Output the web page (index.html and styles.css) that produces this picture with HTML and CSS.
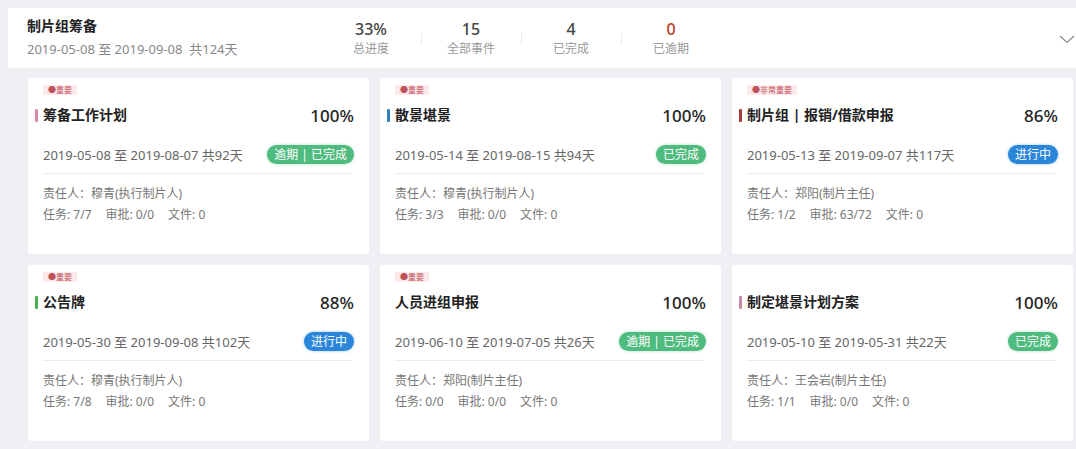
FILE: index.html
```html
<!DOCTYPE html>
<html lang="zh">
<head>
<meta charset="utf-8">
<link rel="stylesheet" href="styles.css">
</head>
<body>
<div class="header">
  <div class="proj">
    <div class="proj-title">制片组筹备</div>
    <div class="proj-date">2019-05-08 至 2019-09-08&nbsp;&nbsp;共124天</div>
  </div>
  <div class="stats">
    <div class="stat"><div class="num">33%</div><div class="lbl">总进度</div></div>
    <div class="stat"><div class="num">15</div><div class="lbl">全部事件</div></div>
    <div class="stat"><div class="num">4</div><div class="lbl">已完成</div></div>
    <div class="stat"><div class="num red">0</div><div class="lbl">已逾期</div></div>
  </div>
  <svg class="chev" width="16" height="10" viewBox="0 0 16 10"><polyline points="1,2 8,8.5 15,2" fill="none" stroke="#8a8a8a" stroke-width="1.2"/></svg>
</div>

<div class="grid">
  <div class="card">
    <div class="tagrow"><span class="tag">●重要</span></div>
    <div class="titlerow"><div class="title"><i class="bar pink"></i>筹备工作计划</div><div class="pct">100%</div></div>
    <div class="daterow"><span class="date">2019-05-08 至 2019-08-07 共92天</span><span class="badge green">逾期 | 已完成</span></div>
    <div class="info">责任人：穆青(执行制片人)</div>
    <div class="info">任务: 7/7<span class="sp"></span>审批: 0/0<span class="sp"></span>文件: 0</div>
  </div>
  <div class="card">
    <div class="tagrow"><span class="tag">●重要</span></div>
    <div class="titlerow"><div class="title"><i class="bar blue"></i>散景堪景</div><div class="pct">100%</div></div>
    <div class="daterow"><span class="date">2019-05-14 至 2019-08-15 共94天</span><span class="badge green">已完成</span></div>
    <div class="info">责任人：穆青(执行制片人)</div>
    <div class="info">任务: 3/3<span class="sp"></span>审批: 0/0<span class="sp"></span>文件: 0</div>
  </div>
  <div class="card">
    <div class="tagrow"><span class="tag">●非常重要</span></div>
    <div class="titlerow"><div class="title"><i class="bar red"></i>制片组 | 报销/借款申报</div><div class="pct">86%</div></div>
    <div class="daterow"><span class="date">2019-05-13 至 2019-09-07 共117天</span><span class="badge bluebg">进行中</span></div>
    <div class="info">责任人：郑阳(制片主任)</div>
    <div class="info">任务: 1/2<span class="sp"></span>审批: 63/72<span class="sp"></span>文件: 0</div>
  </div>
  <div class="card">
    <div class="tagrow"><span class="tag">●重要</span></div>
    <div class="titlerow"><div class="title"><i class="bar green"></i>公告牌</div><div class="pct">88%</div></div>
    <div class="daterow"><span class="date">2019-05-30 至 2019-09-08 共102天</span><span class="badge bluebg">进行中</span></div>
    <div class="info">责任人：穆青(执行制片人)</div>
    <div class="info">任务: 7/8<span class="sp"></span>审批: 0/0<span class="sp"></span>文件: 0</div>
  </div>
  <div class="card">
    <div class="tagrow"><span class="tag">●重要</span></div>
    <div class="titlerow"><div class="title">人员进组申报</div><div class="pct">100%</div></div>
    <div class="daterow"><span class="date">2019-06-10 至 2019-07-05 共26天</span><span class="badge green">逾期 | 已完成</span></div>
    <div class="info">责任人：郑阳(制片主任)</div>
    <div class="info">任务: 0/0<span class="sp"></span>审批: 0/0<span class="sp"></span>文件: 0</div>
  </div>
  <div class="card">
    <div class="tagrow"></div>
    <div class="titlerow"><div class="title"><i class="bar mauve"></i>制定堪景计划方案</div><div class="pct">100%</div></div>
    <div class="daterow"><span class="date">2019-05-10 至 2019-05-31 共22天</span><span class="badge green">已完成</span></div>
    <div class="info">责任人：王会岩(制片主任)</div>
    <div class="info">任务: 1/1<span class="sp"></span>审批: 0/0<span class="sp"></span>文件: 0</div>
  </div>
</div>
</body>
</html>
```

FILE: styles.css
```css
* { box-sizing: border-box; }
html, body { margin: 0; padding: 0; }
body {
  background: #f0f0f4;
  font-family: "Noto Sans", "Noto Sans CJK SC", sans-serif;
  color: #333;
  width: 1076px;
  height: 449px;
  overflow: hidden;
}
.header {
  margin: 8px 0 0 8px;
  height: 60px;
  background: #fff;
  display: flex;
  align-items: center;
}
.proj {
  width: 313px;
  padding-left: 19px;
}
.proj-title {
  font-size: 14px;
  font-weight: 700;
  color: #222;
  line-height: 20px;
  margin-top: -2px;
}
.proj-date {
  font-size: 13px;
  color: #888;
  line-height: 18px;
  margin-top: 4px;
}
.stats {
  display: flex;
  width: 400px;
}
.stat {
  width: 100px;
  text-align: center;
  position: relative;
}
.stat + .stat::before {
  content: "";
  position: absolute;
  left: 0;
  top: 14px;
  height: 12px;
  width: 1px;
  background: #ececec;
}
.num {
  font-size: 16px;
  font-weight: 500;
  color: #444;
  line-height: 20px;
}
.num.red { color: #c0392b; }
.lbl {
  font-size: 12px;
  color: #999;
  line-height: 18px;
  margin-top: 1px;
}
.chev {
  margin-left: auto;
  margin-right: 1px;
  margin-top: 2px;
}
.grid {
  display: grid;
  grid-template-columns: repeat(3, 341px);
  grid-auto-rows: 176px;
  column-gap: 11px;
  row-gap: 11px;
  margin: 10px 0 0 28px;
}
.card {
  background: #fff;
  border-radius: 3px;
  padding: 7px 15px 0 15px;
}
.tagrow {
  height: 10px;
  display: flex;
}
.tag {
  font-size: 8px;
  line-height: 10px;
  height: 10px;
  padding: 0 5px;
  background: #fde8ea;
  color: #c0505a;
  border-radius: 1px;
}
.titlerow {
  display: flex;
  justify-content: space-between;
  align-items: flex-end;
  margin-top: 10px;
  height: 22px;
}
.title {
  font-size: 14px;
  font-weight: 700;
  color: #222;
  line-height: 20px;
  display: flex;
  align-items: center;
  margin-bottom: 2px;
}
.bar {
  display: block;
  width: 3px;
  height: 13px;
  border-radius: 1px;
  margin-left: -8px;
  margin-right: 5px;
}
.bar.pink { background: #d98aa6; }
.bar.blue { background: #2f7fc1; }
.bar.red { background: #a83a3a; }
.bar.green { background: #4caf50; }
.bar.mauve { background: #c78aa8; }
.pct {
  font-size: 17px;
  font-weight: 500;
  color: #222;
  line-height: 22px;
}
.daterow {
  display: flex;
  justify-content: space-between;
  align-items: center;
  margin-top: 17px;
  height: 20px;
  margin-bottom: 19px;
  position: relative;
}
.daterow::after {
  content: "";
  position: absolute;
  left: 0;
  right: 2px;
  bottom: -10px;
  height: 1px;
  background: #ececec;
}
.date {
  font-size: 13px;
  color: #666;
}
.badge {
  height: 19px;
  line-height: 19px;
  border-radius: 10px;
  padding: 0 7px;
  font-size: 12px;
  color: #fff;
}
.badge.green { background: #4fbb7e; box-shadow: 0 0 3px rgba(79,187,126,0.5); }
.badge.bluebg { background: #2b86d9; box-shadow: 0 0 3px rgba(43,134,217,0.5); }
.info {
  font-size: 12px;
  color: #777;
  line-height: 21px;
}
.sp { display: inline-block; width: 14px; }
```
